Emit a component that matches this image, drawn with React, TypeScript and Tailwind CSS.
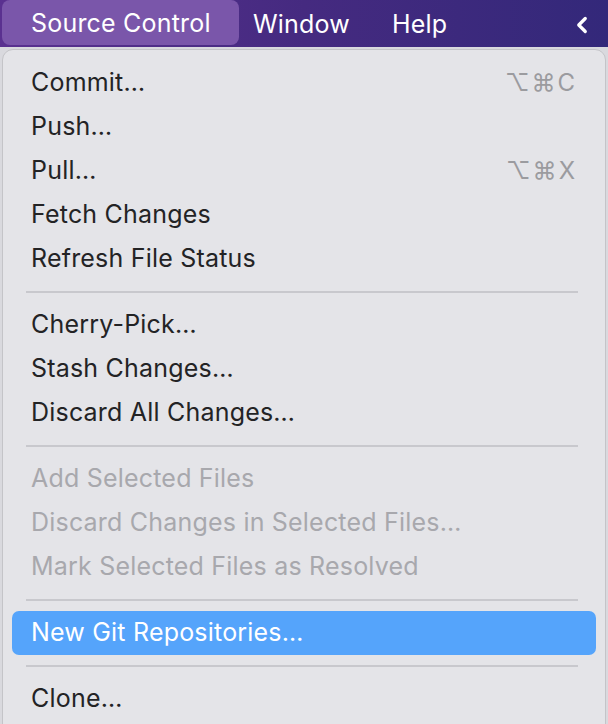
import { ChevronLeft } from "lucide-react";

type Item =
  | { kind: "item"; label: string; shortcut?: string; disabled?: boolean; active?: boolean }
  | { kind: "sep" };

const items: Item[] = [
  { kind: "item", label: "Commit…", shortcut: "⌥⌘C" },
  { kind: "item", label: "Push…" },
  { kind: "item", label: "Pull…", shortcut: "⌥⌘X" },
  { kind: "item", label: "Fetch Changes" },
  { kind: "item", label: "Refresh File Status" },
  { kind: "sep" },
  { kind: "item", label: "Cherry-Pick…" },
  { kind: "item", label: "Stash Changes…" },
  { kind: "item", label: "Discard All Changes…" },
  { kind: "sep" },
  { kind: "item", label: "Add Selected Files", disabled: true },
  { kind: "item", label: "Discard Changes in Selected Files…", disabled: true },
  { kind: "item", label: "Mark Selected Files as Resolved", disabled: true },
  { kind: "sep" },
  { kind: "item", label: "New Git Repositories…", active: true },
  { kind: "sep" },
  { kind: "item", label: "Clone…" },
];

export default function App() {
  return (
    <div
      className="w-[608px] h-[724px] overflow-hidden bg-[#d9d9de]"
      style={{ fontFamily: "Inter, 'Noto Sans', sans-serif" }}
    >
      <div className="h-[47px] flex items-center bg-gradient-to-r from-[#5a3190] via-[#452a80] to-[#33287a] text-white text-[25px] tracking-[0.2px] pl-[2px] pr-[13px]">
        <div className="h-[45px] w-[237px] rounded-[8px] bg-[#7a56aa] flex items-center pl-[29px] self-start pt-[2px]">
          Source Control
        </div>
        <div className="pl-[14px] pt-[2px]">Window</div>
        <div className="pl-[42px] pt-[2px]">Help</div>
        <div className="ml-auto pt-[2px]">
          <ChevronLeft className="w-[26px] h-[26px]" strokeWidth={3} />
        </div>
      </div>
      <div className="mt-[2px] mx-[2px] h-[700px] rounded-t-[11px] border border-[#c4c4c8] bg-[#e4e4e8] pt-[11px] px-[9px]">
        {items.map((it, i) =>
          it.kind === "sep" ? (
            <div key={i} className="h-[22px] flex items-center pl-[14px] pr-[18px]">
              <div className="h-[2px] w-full bg-[#c8c8cd]" />
            </div>
          ) : (
            <div
              key={i}
              className={`h-[44px] flex items-center px-[19px] rounded-[7px] text-[25px] tracking-[0.2px] ${
                it.active
                  ? "bg-[#55a4fb] text-white"
                  : it.disabled
                  ? "text-[#a8a8ad]"
                  : "text-[#232325]"
              }`}
            >
              <span className="flex-1">{it.label}</span>
              {it.shortcut && (
                <span className="text-[#9b9b9f] text-[24px] tracking-[2px] pr-[0px]">{it.shortcut}</span>
              )}
            </div>
          )
        )}
      </div>
    </div>
  );
}
